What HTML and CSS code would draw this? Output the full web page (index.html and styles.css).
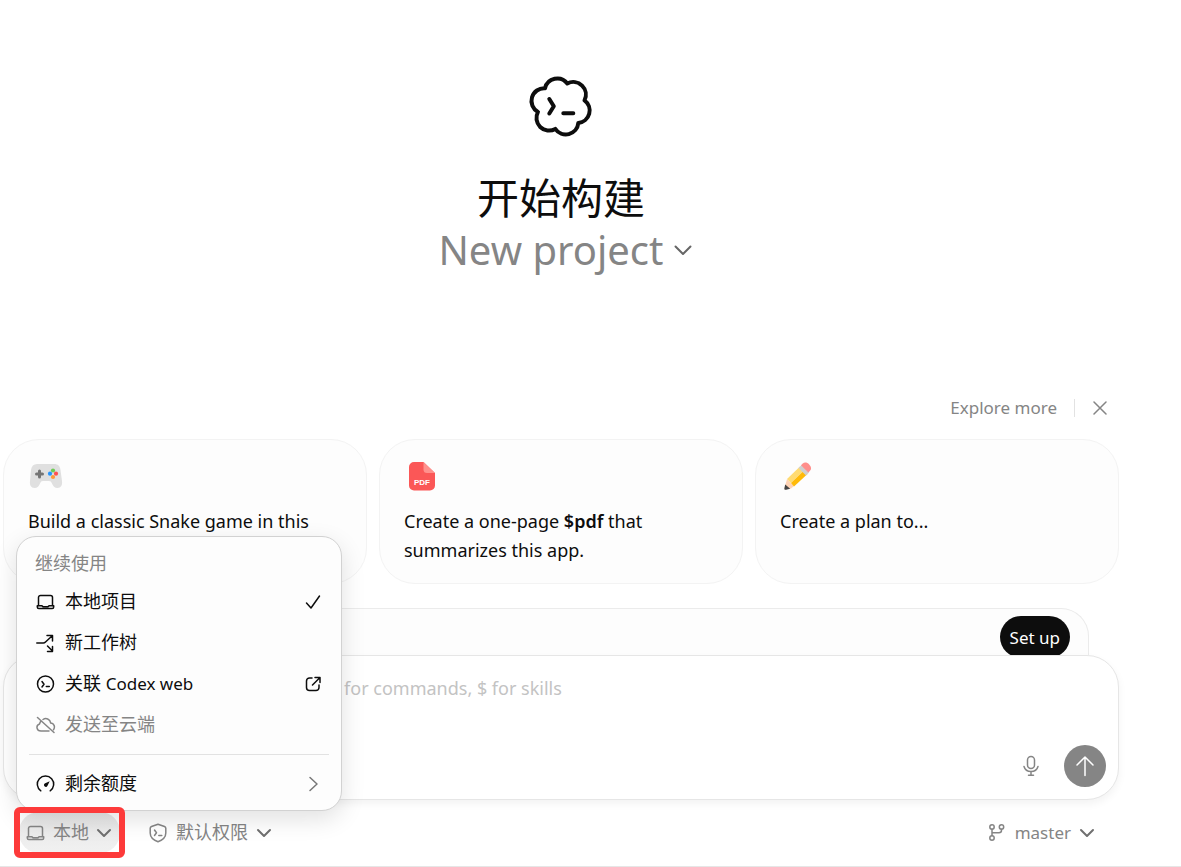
FILE: index.html
```html
<!DOCTYPE html>
<html lang="zh-CN">
<head>
<meta charset="utf-8">
<meta name="viewport" content="width=device-width, initial-scale=1">
<title>开始构建</title>
<link rel="stylesheet" href="styles.css">
</head>
<body>
<svg class="defs" aria-hidden="true">
  <symbol id="laptop" viewBox="0 0 20 20"><path d="M2.500 13.500v-8a2 2 0 0 1 2-2h10a2 2 0 0 1 2 2v8"/><path d="M1.300 13.800h4.700l1.200 1h4.600l1.200-1h4.700v1.200c0 .9-.6 1.500-1.500 1.500H2.800c-.9 0-1.500-.6-1.500-1.500z"/></symbol>
  <symbol id="chevron" viewBox="0 0 16 16"><path d="M2 5l6 6 6-6"/></symbol>
</svg>
<main class="page">
  <section class="hero">
    <svg class="logo" viewBox="0 0 60 60" aria-hidden="true">
      <path d="M14 12.300A12.600 12.600 0 0 1 36.300 7.500A12.600 12.600 0 0 1 53.500 24.300A12.600 12.600 0 0 1 47.300 47A12.600 12.600 0 0 1 24.300 52.900A12.600 12.600 0 0 1 7 35.900A12.600 12.600 0 0 1 14 12.300Z"/>
      <path d="M18.300 23l4.500 7.300-4.500 7.200M32.300 37.300h10"/>
    </svg>
    <h1 class="title">开始构建</h1>
    <button class="project" type="button"><span class="project-name">New project</span><svg class="project-chevron" viewBox="0 0 18 18"><path d="M1.500 5.500L9 13l7.500-7.500"/></svg></button>
  </section>

  <div class="explore">
    <a class="explore-link" href="#">Explore more</a>
    <button class="close" type="button" aria-label="Close"><svg viewBox="0 0 14 14"><path d="M1 1l12 12M13 1L1 13"/></svg></button>
  </div>

  <section class="cards">
    <button class="card" type="button">
      <svg class="card-icon" viewBox="0 0 36 32" aria-hidden="true">
        <path fill="#e0e0e0" d="M9 4h17c4 0 6 2 6.500 6L34 21c.6 4-1 7-4.500 7-3 0-4.500-2-5.500-4.500-.7-1.700-1.500-2.500-3-2.500h-6c-1.500 0-2.300.8-3 2.500C11 26 9.500 28 6.500 28 3 28 1.400 25 2 21l1-11C3.500 6 5.500 4 9 4z"/>
        <path d="M11.500 11v6M8.500 14h6" stroke="#757575" stroke-width="3"/>
        <circle cx="25" cy="10.500" r="2.100" fill="#6ecb55"/><circle cx="28" cy="13.700" r="2.100" fill="#ff5050"/><circle cx="25" cy="17" r="2.100" fill="#ff9838"/><circle cx="22" cy="13.700" r="2.100" fill="#2395ff"/>
      </svg>
      <span>Build a classic Snake game in this repo.</span>
    </button>
    <button class="card" type="button">
      <svg class="card-icon" viewBox="0 0 36 32" aria-hidden="true">
        <path fill="#fb5757" d="M10 2h9.500L31 13v12.500a5 5 0 0 1-5 5H10a5 5 0 0 1-5-5V7a5 5 0 0 1 5-5z"/>
        <path fill="#ff918d" d="M19.500 2L31 13h-8a3.500 3.500 0 0 1-3.500-3.500z"/>
        <text x="18" y="25" class="pdf-label">PDF</text>
      </svg>
      <span>Create a one-page <strong>$pdf</strong> that summarizes this app.</span>
    </button>
    <button class="card" type="button">
      <svg class="card-icon" viewBox="0 0 36 32" aria-hidden="true">
        <path fill="#ffd3b5" d="M7 19l7 7-3 2.500-6 1L4.500 28z"/>
        <path fill="#464646" d="M5.200 24.500l5 4.200L6 29.800c-1.200.2-1.800-.4-1.600-1.500z"/>
        <path fill="#ffdb72" d="M7 19L20 6.500l4 4L11 23z"/>
        <path fill="#ffba08" d="M11 23l13-12.500 3.500 3.500L14 26.500z"/>
        <path fill="#cfcfcf" d="M18.500 8l3-3 7.500 7.500-3 3z"/>
        <path fill="#ff8e8b" d="M21 5.300l1.500-1.500c2-2 4.500-1.600 6.700.6s2.600 4.700.6 6.700l-1.500 1.500z"/>
      </svg>
      <span>Create a plan to...</span>
    </button>
  </section>

  <section class="composer-wrap">
    <div class="banner"><button class="setup" type="button">Set up</button></div>
    <form class="composer">
      <textarea class="prompt" rows="1" aria-label="Prompt" placeholder="Ask Codex anything, @ to add files, / for commands, $ for skills"></textarea>
      <div class="composer-actions">
        <button class="mic" type="button" aria-label="Dictate"><svg viewBox="0 0 20 22"><rect x="6.500" y="1.500" width="7" height="12" rx="3.500"/><path d="M3 11.500c1 3.500 3.500 5 7 5s6-1.500 7-5M10 16.500V20M7.500 20.300h5"/></svg></button>
        <button class="send" type="button" aria-label="Send"><svg viewBox="0 0 20 22"><path d="M10 20.500V2M2 10l8-8 8 8"/></svg></button>
      </div>
    </form>
  </section>

  <footer class="toolbar">
    <div class="local">
      <button class="tool tool-active" type="button" aria-expanded="true"><svg class="icon"><use href="#laptop"/></svg>本地<svg class="chev"><use href="#chevron"/></svg></button>
      <div class="menu" role="menu">
        <p class="menu-title">继续使用</p>
        <button class="item" type="button"><svg class="icon"><use href="#laptop"/></svg><span class="label">本地项目</span><svg class="end" viewBox="0 0 16 16"><path d="M1.500 9l4.500 5L14.500 2"/></svg></button>
        <button class="item" type="button"><svg class="icon" viewBox="0 0 20 20"><path d="M.8 10h6.500c1 0 1.500-.3 2.200-1L16 3M11 2.500h5.500V8M11.500 13l5 5M16.500 13.500v5h-5"/></svg><span class="label">新工作树</span></button>
        <button class="item" type="button"><svg class="icon" viewBox="0 0 20 20"><circle cx="9.500" cy="10" r="8"/><path d="M6 7.500l2 2.800-2 2.700M10.300 12.500h3"/></svg><span class="label">关联 <span class="latin">Codex web</span></span><svg class="end" viewBox="0 0 16 16"><path d="M7 2H4.500A3 3 0 0 0 1.500 5v6.500a3 3 0 0 0 3 3H11a3 3 0 0 0 3-3V9M10 1.500h5v5M15 1.500L7.500 9"/></svg></button>
        <button class="item" type="button" disabled><svg class="icon" viewBox="0 0 20 20"><path d="M1.500 2.500l16.500 15M7 4.500c3-2 7-.5 7.700 3.500 3.300.3 4.800 3.800 2.800 6.700M13 16H5C.5 16-.5 10.500 3.500 9c.3-1 .6-2 1.300-2.800"/></svg><span class="label">发送至云端</span></button>
        <hr class="rule">
        <button class="item" type="button"><svg class="icon" viewBox="0 0 20 20"><path d="M4.800 16.800a8.200 8.200 0 1 1 9.400 0"/><path class="solid" d="M13.700 7.300l-2.200 4.400a2 2 0 0 1-3 .6 1.900 1.900 0 0 1 .7-3.100z"/></svg><span class="label">剩余额度</span><svg class="end next" viewBox="0 0 16 16"><path d="M5 1.500L12 8l-7 6.500"/></svg></button>
      </div>
      <span class="highlight"></span>
    </div>
    <button class="tool" type="button"><svg class="icon" viewBox="0 0 20 20"><path d="M10 1.200l6.500 2.300c.8.300 1.300 1 1.300 1.800V10c0 4-3 7-7.800 8.800C5.200 17 2.200 14 2.200 10V5.300c0-.8.500-1.500 1.300-1.800z"/><path d="M6.500 7l2 2.800-2 2.700M10.800 12.500h3"/></svg>默认权限<svg class="chev"><use href="#chevron"/></svg></button>
    <button class="tool branch" type="button"><svg class="icon" viewBox="0 0 20 20"><circle cx="5" cy="4" r="2.200"/><circle cx="14.500" cy="4" r="2.200"/><circle cx="5" cy="15" r="2.200"/><path d="M5 6.200v6.600M14.500 6.200v1a2.500 2.500 0 0 1-2.500 2.500H5"/></svg><span class="latin">master</span><svg class="chev"><use href="#chevron"/></svg></button>
  </footer>
</main>
</body>
</html>
```
FILE: styles.css
```css
* { box-sizing: border-box; }
body { margin: 0; background: #fff; color: #0d0d0d; font: 18px/29px "Noto Sans", "Noto Sans CJK SC", sans-serif; }
button { margin: 0; padding: 0; border: 0; background: none; color: inherit; font: inherit; }
svg { display: block; flex: none; fill: none; stroke: currentColor; stroke-width: 1.5; stroke-linecap: round; stroke-linejoin: round; }
.defs { position: absolute; width: 0; height: 0; }
.latin { font-size: 17px; }
.solid { fill: currentColor; stroke: none; }

.page { display: flex; flex-direction: column; min-height: 100vh; padding: 76px 62px 13px 3px; border-bottom: 1px solid #e6e6e6; }

.hero { flex: 1; display: flex; flex-direction: column; align-items: center; }
.logo { width: 60px; height: 60px; overflow: visible; stroke-width: 4; }
.title { margin: 35px 0 0; font-size: 42px; line-height: 54px; font-weight: 400; }
.project { display: flex; align-items: center; gap: 10px; padding-left: 8px; color: #858585; font-size: 40px; line-height: 50px; }
.project-name { overflow: hidden; }
.project-chevron { width: 18px; height: 18px; stroke: #666; stroke-width: 2; }

.explore { display: flex; align-items: center; justify-content: flex-end; height: 30px; margin-bottom: 16px; padding-right: 12px; color: #858585; }
.explore-link { padding-right: 17px; color: inherit; font-size: 17px; line-height: 18px; text-decoration: none; border-right: 1px solid #e2e2e2; }
.close { padding: 0 0 0 18px; }
.close svg { width: 14px; height: 14px; }

.cards { display: grid; grid-template-columns: repeat(3, 1fr); gap: 12px; margin-bottom: 24px; }
.card { display: flex; flex-direction: column; align-items: flex-start; gap: 15px; min-height: 145px; padding: 20px 24px 18px; border: 1px solid #f3f3f3; border-radius: 36px; background: #fdfdfd; text-align: left; }
.card-icon { width: 36px; height: 32px; stroke: none; }
.pdf-label { fill: #fff; font: 700 8px "Liberation Sans", sans-serif; text-anchor: middle; }
.card strong { font-weight: 600; }

.banner { display: flex; justify-content: flex-end; height: 47px; margin: 0 30px; padding: 7px 18px 0; border: 1px solid #ebebeb; border-bottom: 0; border-radius: 28px 28px 0 0; background: #fdfdfd; }
.setup { height: 42px; padding: 0 10px; border-radius: 21px; background: #0d0d0d; color: #fff; font-size: 17px; }
.composer { position: relative; display: flex; flex-direction: column; justify-content: space-between; min-height: 145px; padding: 18px 12px 12px 29px; border: 1px solid #e6e6e6; border-radius: 32px; background: #fff; box-shadow: 0 4px 8px rgba(0, 0, 0, .05); }
.prompt { width: 100%; padding: 0; border: 0; outline: 0; resize: none; background: none; font: inherit; overflow: hidden; }
.prompt::placeholder { color: #c3c3c3; }
.composer-actions { display: flex; justify-content: flex-end; align-items: center; gap: 23px; }
.mic { color: #858585; }
.mic svg, .send svg { width: 20px; height: 22px; }
.send { display: grid; place-items: center; width: 42px; height: 42px; border-radius: 50%; background: #858585; color: #fff; }

.toolbar { display: flex; align-items: center; gap: 20px; margin-top: 12px; padding: 0 24px 0 16px; color: #858585; }
.tool { display: flex; align-items: center; gap: 8px; height: 41px; padding: 0 8px; white-space: nowrap; }
.tool-active { gap: 7px; border-radius: 20px; padding-left: 7px; background: linear-gradient(#e6e6e6, #f1f1f1); }
.branch { margin-left: auto; padding-right: 0; }
.icon { width: 20px; height: 20px; }
.chev { width: 16px; height: 16px; stroke: #707070; stroke-width: 2; }
.local { position: relative; }
.highlight { position: absolute; inset: -5px; border: 6px solid #fd3a3a; border-radius: 6px; pointer-events: none; }

.menu { position: absolute; left: -3px; bottom: 42px; width: 326px; padding: 12px 12px 6px; border: 1px solid #d2d2d2; border-radius: 20px; background: #fdfdfd; box-shadow: 0 8px 24px rgba(0, 0, 0, .12); color: #0d0d0d; }
.menu-title { margin: 0 6px 3px; color: #858585; }
.item { display: flex; align-items: center; gap: 9px; width: 100%; height: 41px; padding: 0 8px 0 7px; text-align: left; }
.item:disabled { color: #858585; }
.label { flex: 1; }
.end { width: 16px; height: 16px; }
.next { stroke: #777; }
.rule { margin: 9px 0 8px; border: 0; border-top: 1px solid #e2e2e2; }
```
